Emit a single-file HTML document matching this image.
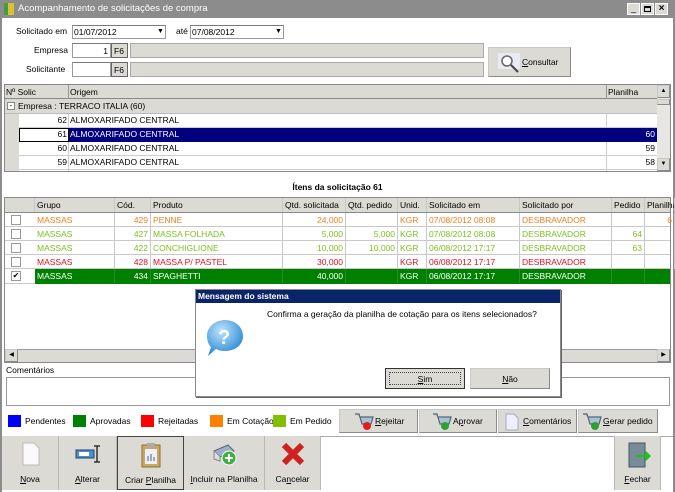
<!DOCTYPE html>
<html><head><meta charset="utf-8"><style>
*{box-sizing:border-box;margin:0;padding:0}
body{width:675px;height:492px;overflow:hidden;background:#fff;font-family:"Liberation Sans",sans-serif;font-size:8.5px;color:#000;position:relative}
.a{position:absolute}
.t{position:absolute;white-space:nowrap;line-height:14px}
.inp{position:absolute;background:#fff;border:1px solid #9a9a9a;border-top-color:#7a7a7a}
.gray{position:absolute;background:#dcdad5;border:1px solid #a8a8a8}
.btn{position:absolute;background:#dcdad5;border:1px solid #c8c8c8;border-right-color:#8a8a8a;border-bottom-color:#8a8a8a}
.row{position:absolute;left:8px;height:14px;border-bottom:1px solid #c8c8c8}
.c{position:absolute;top:0;height:14px;line-height:14px;padding:0 2px;white-space:nowrap;border-right:1px solid #c8c8c8;overflow:hidden}
.r{text-align:right}
.hd{background:#dcdad5;border-bottom:1px solid #888}
.cb{position:absolute;left:6px;top:2px;width:10px;height:10px;border:1px solid #999;background:#fff;font-size:8px;line-height:8px;text-align:center}
.or{color:#f08020}.gr{color:#7cc020}.rd{color:#e01020}
.tb{position:absolute;top:436px;height:54px;background:#dcdad5;border-right:1px solid #b8b8b8;text-align:center}
.tb .t{left:0;right:0;top:36px;text-align:center}
u{text-decoration:underline}
</style></head><body>
<div class="a" style="left:0;top:0;width:675px;height:18px;background:#8c8c8c"></div>
<div class="a" style="left:4px;top:3px;width:10px;height:12px;background:#e0c030;border-left:4px solid #40a040"></div>
<div class="t" style="left:18px;top:2px;color:#fff;font-size:9.5px">Acompanhamento de solicitações de compra</div>
<div class="a" style="left:627px;top:3px;width:13px;height:12px;background:#dcdad5;border:1px solid #fff;font-size:9px;line-height:9px;text-align:center">_</div>
<div class="a" style="left:641px;top:3px;width:13px;height:12px;background:#dcdad5;border:1px solid #fff"><div class="a" style="left:2px;top:2px;width:7px;height:6px;border:1px solid #000;border-top-width:2px"></div></div>
<div class="a" style="left:655px;top:3px;width:13px;height:12px;background:#dcdad5;border:1px solid #fff;font-size:10px;line-height:10px;text-align:center;font-weight:bold">×</div>
<div class="a" style="left:0;top:18px;width:2px;height:474px;background:#8c8c8c"></div>
<div class="a" style="left:673px;top:18px;width:2px;height:474px;background:#8c8c8c"></div>

<div class="t" style="left:16px;top:24px">Solicitado em</div>
<div class="inp" style="left:72px;top:25px;width:94px;height:14px"><div class="t" style="left:1px;top:-1px">01/07/2012</div><div class="t" style="left:84px;top:-1px;font-size:7px">▼</div></div>
<div class="t" style="left:176px;top:24px">até</div>
<div class="inp" style="left:190px;top:25px;width:94px;height:14px"><div class="t" style="left:1px;top:-1px">07/08/2012</div><div class="t" style="left:84px;top:-1px;font-size:7px">▼</div></div>
<div class="t" style="left:34px;top:43px">Empresa</div>
<div class="inp" style="left:72px;top:43px;width:39px;height:15px"><div class="t" style="right:2px;top:0">1</div></div>
<div class="gray" style="left:111px;top:43px;width:17px;height:15px;border-color:#666"><div class="t" style="left:2px;top:0">F6</div></div>
<div class="gray" style="left:130px;top:43px;width:354px;height:15px"></div>
<div class="t" style="left:26px;top:62px">Solicitante</div>
<div class="inp" style="left:72px;top:62px;width:39px;height:15px"></div>
<div class="gray" style="left:111px;top:62px;width:17px;height:15px;border-color:#666"><div class="t" style="left:2px;top:0">F6</div></div>
<div class="gray" style="left:130px;top:62px;width:354px;height:15px"></div>
<div class="btn" style="left:488px;top:47px;width:83px;height:30px"><svg class="a" style="left:9px;top:5px" width="24" height="20"><rect x="0" y="0" width="22" height="16" fill="#e8eaf4"/><circle cx="9" cy="8" r="5" fill="#fff" stroke="#666" stroke-width="1.5"/><line x1="13" y1="12" x2="20" y2="19" stroke="#444" stroke-width="2"/></svg><div class="t" style="left:33px;top:7px"><u>C</u>onsultar</div></div>

<div class="a" style="left:4px;top:84px;width:667px;height:88px;border:1px solid #888;background:#fff"></div>
<div class="a hd" style="left:5px;top:85px;width:652px;height:14px"></div>
<div class="t" style="left:6px;top:85px">Nº Solic</div>
<div class="a" style="left:68px;top:85px;width:1px;height:14px;background:#999"></div>
<div class="t" style="left:70px;top:85px">Origem</div>
<div class="a" style="left:606px;top:85px;width:1px;height:14px;background:#999"></div>
<div class="t" style="left:608px;top:85px">Planilha</div>
<div class="a" style="left:5px;top:99px;width:652px;height:15px;background:#dcdad5;border-bottom:1px solid #bbb"></div>
<div class="a" style="left:7px;top:102px;width:8px;height:8px;border:1px solid #888;background:#fff;font-size:8px;line-height:5px;text-align:center">-</div>
<div class="t" style="left:18px;top:99px">Empresa : TERRACO ITALIA (60)</div>
<div class="a" style="left:5px;top:114px;width:14px;height:57px;background:#dcdad5"></div>
<div class="a" style="left:19px;top:114px;width:638px;height:57px">
 <div class="a" style="left:0;top:0;width:638px;height:14px;border-bottom:1px solid #ccc"></div>
 <div class="a" style="left:0;top:14px;width:638px;height:14px;border-bottom:1px solid #ccc"></div>
 <div class="a" style="left:0;top:28px;width:638px;height:14px;border-bottom:1px solid #ccc"></div>
 <div class="a" style="left:0;top:42px;width:638px;height:14px;border-bottom:1px solid #ccc"></div>
 <div class="a" style="left:49px;top:0;width:1px;height:57px;background:#ccc"></div>
 <div class="a" style="left:587px;top:0;width:1px;height:57px;background:#ccc"></div>
 <div class="a" style="left:0;top:14px;width:50px;height:14px;border:1px solid #000"></div>
 <div class="a" style="left:50px;top:14px;width:588px;height:14px;background:#00007f"></div>
</div>
<div class="t" style="left:52px;top:113px;width:15px;text-align:right">62</div><div class="t" style="left:70px;top:113px">ALMOXARIFADO CENTRAL</div>
<div class="t" style="left:52px;top:127px;width:15px;text-align:right">61</div><div class="t" style="left:70px;top:127px;color:#fff">ALMOXARIFADO CENTRAL</div><div class="t" style="left:640px;top:127px;color:#fff;width:15px;text-align:right">60</div>
<div class="t" style="left:52px;top:141px;width:15px;text-align:right">60</div><div class="t" style="left:70px;top:141px">ALMOXARIFADO CENTRAL</div><div class="t" style="left:640px;top:141px;width:15px;text-align:right">59</div>
<div class="t" style="left:52px;top:155px;width:15px;text-align:right">59</div><div class="t" style="left:70px;top:155px">ALMOXARIFADO CENTRAL</div><div class="t" style="left:640px;top:155px;width:15px;text-align:right">58</div>
<div class="a" style="left:657px;top:85px;width:13px;height:86px;background:#e8e6e2"></div>
<div class="btn" style="left:657px;top:85px;width:13px;height:13px;font-size:6px;text-align:center;line-height:11px">▲</div>
<div class="btn" style="left:657px;top:99px;width:13px;height:6px"></div>
<div class="btn" style="left:657px;top:158px;width:13px;height:13px;font-size:6px;text-align:center;line-height:11px">▼</div>

<div class="t" style="left:0;width:675px;top:180px;text-align:center;font-weight:bold">Ítens da solicitação 61</div>

<div class="a" style="left:4px;top:197px;width:667px;height:166px;border:1px solid #888;background:#fff"></div>
<div class="a hd" style="left:5px;top:198px;width:665px;height:15px"></div>
<div style="position:absolute;left:5px;top:198px;width:665px;height:15px">
 <div class="c" style="left:0;width:30px"></div><div class="c" style="left:30px;width:80px">Grupo</div><div class="c" style="left:110px;width:36px">Cód.</div><div class="c" style="left:146px;width:132px">Produto</div><div class="c" style="left:278px;width:63px">Qtd. solicitada</div><div class="c" style="left:341px;width:52px">Qtd. pedido</div><div class="c" style="left:393px;width:29px">Unid.</div><div class="c" style="left:422px;width:93px">Solicitado em</div><div class="c" style="left:515px;width:92px">Solicitado por</div><div class="c" style="left:607px;width:33px">Pedido</div><div class="c" style="left:640px;width:30px">Planilha</div>
</div>
<div style="position:absolute;left:5px;top:213px;width:665px;height:72px">
 <div class="row or" style="left:0;top:0;width:665px"><div class="cb"></div><div class="c" style="left:30px;width:80px">MASSAS</div><div class="c r" style="left:110px;width:36px">429</div><div class="c" style="left:146px;width:132px">PENNE</div><div class="c r" style="left:278px;width:63px">24,000</div><div class="c" style="left:341px;width:52px"></div><div class="c" style="left:393px;width:29px">KGR</div><div class="c" style="left:422px;width:93px">07/08/2012 08:08</div><div class="c" style="left:515px;width:92px">DESBRAVADOR</div><div class="c" style="left:607px;width:33px"></div><div class="c r" style="left:640px;width:30px">6</div></div>
 <div class="row gr" style="left:0;top:14px;width:665px"><div class="cb"></div><div class="c" style="left:30px;width:80px">MASSAS</div><div class="c r" style="left:110px;width:36px">427</div><div class="c" style="left:146px;width:132px">MASSA FOLHADA</div><div class="c r" style="left:278px;width:63px">5,000</div><div class="c r" style="left:341px;width:52px">5,000</div><div class="c" style="left:393px;width:29px">KGR</div><div class="c" style="left:422px;width:93px">07/08/2012 08:08</div><div class="c" style="left:515px;width:92px">DESBRAVADOR</div><div class="c r" style="left:607px;width:33px">64</div><div class="c" style="left:640px;width:30px"></div></div>
 <div class="row gr" style="left:0;top:28px;width:665px"><div class="cb"></div><div class="c" style="left:30px;width:80px">MASSAS</div><div class="c r" style="left:110px;width:36px">422</div><div class="c" style="left:146px;width:132px">CONCHIGLIONE</div><div class="c r" style="left:278px;width:63px">10,000</div><div class="c r" style="left:341px;width:52px">10,000</div><div class="c" style="left:393px;width:29px">KGR</div><div class="c" style="left:422px;width:93px">06/08/2012 17:17</div><div class="c" style="left:515px;width:92px">DESBRAVADOR</div><div class="c r" style="left:607px;width:33px">63</div><div class="c" style="left:640px;width:30px"></div></div>
 <div class="row rd" style="left:0;top:42px;width:665px"><div class="cb"></div><div class="c" style="left:30px;width:80px">MASSAS</div><div class="c r" style="left:110px;width:36px">428</div><div class="c" style="left:146px;width:132px">MASSA P/ PASTEL</div><div class="c r" style="left:278px;width:63px">30,000</div><div class="c" style="left:341px;width:52px"></div><div class="c" style="left:393px;width:29px">KGR</div><div class="c" style="left:422px;width:93px">06/08/2012 17:17</div><div class="c" style="left:515px;width:92px">DESBRAVADOR</div><div class="c" style="left:607px;width:33px"></div><div class="c" style="left:640px;width:30px"></div></div>
 <div class="row" style="left:0;top:56px;width:665px;color:#fff;height:15px"><div class="cb" style="color:#000">✔</div><div class="a" style="left:30px;top:0;width:635px;height:15px;background:#008000"></div><div class="c" style="left:30px;width:80px;border-color:#2a8a2a">MASSAS</div><div class="c r" style="left:110px;width:36px;border-color:#2a8a2a">434</div><div class="c" style="left:146px;width:132px;border-color:#2a8a2a">SPAGHETTI</div><div class="c r" style="left:278px;width:63px;border-color:#2a8a2a">40,000</div><div class="c" style="left:341px;width:52px;border-color:#2a8a2a"></div><div class="c" style="left:393px;width:29px;border-color:#2a8a2a">KGR</div><div class="c" style="left:422px;width:93px;border-color:#2a8a2a">06/08/2012 17:17</div><div class="c" style="left:515px;width:92px;border-color:#2a8a2a">DESBRAVADOR</div><div class="c" style="left:607px;width:33px;border-color:#2a8a2a"></div></div>
</div>
<div class="a" style="left:5px;top:349px;width:665px;height:13px;background:#dcdad5;border-top:1px solid #999"></div>
<div class="btn" style="left:5px;top:349px;width:13px;height:13px;font-size:6px;text-align:center;line-height:11px">◀</div>
<div class="btn" style="left:657px;top:349px;width:13px;height:13px;font-size:6px;text-align:center;line-height:11px">▶</div>

<div class="t" style="left:6px;top:363px">Comentários</div>
<div class="a" style="left:6px;top:377px;width:664px;height:29px;border:1px solid #999;background:#fff"></div>

<div class="a" style="left:8px;top:415px;width:13px;height:12px;background:#0000ff"></div><div class="t" style="left:25px;top:414px">Pendentes</div>
<div class="a" style="left:73px;top:415px;width:13px;height:12px;background:#008000"></div><div class="t" style="left:90px;top:414px">Aprovadas</div>
<div class="a" style="left:141px;top:415px;width:13px;height:12px;background:#ff0000"></div><div class="t" style="left:158px;top:414px">Rejeitadas</div>
<div class="a" style="left:210px;top:415px;width:13px;height:12px;background:#ff8000"></div><div class="t" style="left:227px;top:414px">Em Cotação</div>
<div class="a" style="left:273px;top:415px;width:13px;height:12px;background:#80c000"></div><div class="t" style="left:290px;top:414px">Em Pedido</div>

<div class="btn" style="left:339px;top:409px;width:79px;height:24px"><svg class="a" style="left:14px;top:2px" width="20" height="19"><path d="M1 2h4l3 10h9l2-7H6" fill="#a8c0d8" stroke="#567" stroke-width="1.2"/><circle cx="13" cy="14" r="4" fill="#e02020"/></svg><div class="t" style="left:35px;top:4px"><u>R</u>ejeitar</div></div>
<div class="btn" style="left:419px;top:409px;width:78px;height:24px"><svg class="a" style="left:12px;top:2px" width="20" height="19"><path d="M1 2h4l3 10h9l2-7H6" fill="#a8c0d8" stroke="#567" stroke-width="1.2"/><circle cx="13" cy="14" r="4" fill="#30a030"/></svg><div class="t" style="left:33px;top:4px">A<u>p</u>rovar</div></div>
<div class="btn" style="left:498px;top:409px;width:79px;height:24px"><svg class="a" style="left:6px;top:3px" width="14" height="18"><path d="M1 1h8l4 4v12H1z" fill="#eef" stroke="#aab"/></svg><div class="t" style="left:24px;top:4px"><u>C</u>omentários</div></div>
<div class="btn" style="left:578px;top:409px;width:80px;height:24px"><svg class="a" style="left:3px;top:2px" width="20" height="19"><path d="M1 2h4l3 10h9l2-7H6" fill="#a8c0d8" stroke="#567" stroke-width="1.2"/><circle cx="13" cy="14" r="4" fill="#30a030"/></svg><div class="t" style="left:24px;top:4px"><u>G</u>erar pedido</div></div>

<div class="a" style="left:2px;top:436px;width:671px;height:56px;background:#fff;border-top:1px solid #aaa"></div>
<div class="tb" style="left:2px;width:57px"><svg class="a" style="left:20px;top:6px" width="18" height="24"><path d="M1 1h11l5 5v17H1z" fill="#fafafa" stroke="#bbb"/></svg><div class="t"><u>N</u>ova</div></div>
<div class="tb" style="left:59px;width:58px"><svg class="a" style="left:16px;top:8px" width="28" height="20"><rect x="1" y="6" width="18" height="8" fill="#4a90d0" stroke="#246"/><rect x="4" y="8" width="10" height="4" fill="#fff"/><path d="M19 2h6M22 2v16M19 18h6" stroke="#333" stroke-width="1.5" fill="none"/></svg><div class="t"><u>A</u>lterar</div></div>
<div class="tb" style="left:117px;width:67px;border:1px solid #444"><svg class="a" style="left:23px;top:5px" width="20" height="26"><rect x="1" y="3" width="18" height="22" fill="#c8a860" stroke="#8a7030"/><rect x="4" y="7" width="12" height="15" fill="#eef"/><rect x="6" y="1" width="8" height="4" fill="#aaa"/><path d="M7 19v-5M10 19v-7M13 19v-4" stroke="#9ab" stroke-width="2"/></svg><div class="t">Criar <u>P</u>lanilha</div></div>
<div class="tb" style="left:184px;width:81px"><svg class="a" style="left:28px;top:5px" width="26" height="26"><path d="M2 10l14-6 6 6-14 6z" fill="#9ab0c8" stroke="#567"/><path d="M2 10v8l6 2v-4" fill="#ddd" stroke="#888"/><circle cx="17" cy="17" r="7" fill="#40b040" stroke="#fff"/><path d="M17 13v8M13 17h8" stroke="#fff" stroke-width="2"/></svg><div class="t"><u>I</u>ncluir na Planilha</div></div>
<div class="tb" style="left:265px;width:56px"><svg class="a" style="left:16px;top:6px" width="24" height="24"><path d="M3 3L21 21M21 3L3 21" stroke="#d02020" stroke-width="6"/></svg><div class="t">Ca<u>n</u>celar</div></div>
<div class="tb" style="left:614px;width:47px;border-left:1px solid #b8b8b8"><svg class="a" style="left:12px;top:5px" width="24" height="28"><rect x="2" y="2" width="16" height="24" fill="#7a8a9a" stroke="#456"/><path d="M8 14h10v-5l6 6-6 6v-5H8z" fill="#20c020"/></svg><div class="t"><u>F</u>echar</div></div>

<div class="a" style="left:195px;top:289px;width:366px;height:108px;background:#fff;border:1px solid #888;box-shadow:1px 1px 0 #666"></div>
<div class="a" style="left:196px;top:290px;width:364px;height:13px;background:#0a246a"></div>
<div class="t" style="left:198px;top:289px;color:#fff;font-weight:bold;line-height:14px">Mensagem do sistema</div>
<div class="t" style="left:267px;top:307px">Confirma a geração da planilha de cotação para os itens selecionados?</div>
<svg class="a" style="left:205px;top:318px" width="40" height="42"><defs><radialGradient id="g" cx="0.4" cy="0.3" r="0.7"><stop offset="0" stop-color="#bfe4fb"/><stop offset="1" stop-color="#2a8ad8"/></radialGradient></defs><path d="M20 2C30 2 38 9 38 18S30 33 20 33C16 33 13 32 11 31L3 38 6 29C3 26 2 22 2 18 2 9 10 2 20 2z" fill="url(#g)"/><text x="13" y="26" font-family="Liberation Sans" font-size="20" font-weight="bold" fill="#fff">?</text></svg>
<div class="btn" style="left:385px;top:368px;width:80px;height:21px;border:1px solid #333;background:#dcdad5"><div class="a" style="left:3px;top:3px;right:3px;bottom:3px;border:1px dotted #444"></div><div class="t" style="left:0;right:0;top:3px;text-align:center"><u>S</u>im</div></div>
<div class="btn" style="left:470px;top:368px;width:80px;height:21px"><div class="t" style="left:0;right:0;top:3px;text-align:center"><u>N</u>ão</div></div>
</body></html>
